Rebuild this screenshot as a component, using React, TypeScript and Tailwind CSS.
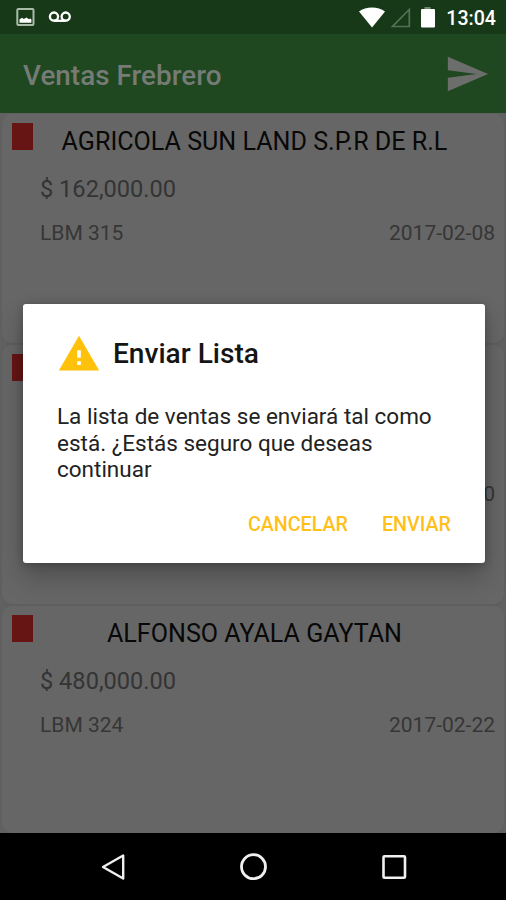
import React from "react";

type Sale = {
  name: string;
  amount: string;
  code: string;
  date: string;
  height: string;
};

const sales: Sale[] = [
  { name: "AGRICOLA SUN LAND S.P.R DE R.L", amount: "$ 162,000.00", code: "LBM 315", date: "2017-02-08", height: "h-[229px]" },
  { name: "", amount: "", code: "", date: "2017-02-20", height: "h-[259px]" },
  { name: "ALFONSO AYALA GAYTAN", amount: "$ 480,000.00", code: "LBM 324", date: "2017-02-22", height: "h-[227px]" },
];

function StatusBar() {
  return (
    <div className="flex h-[34px] shrink-0 items-center bg-[#173918] text-white">
      <svg className="ml-4 h-[18px] w-[19px]" viewBox="0 0 19 18">
        <rect x="1.3" y="1.1" width="16.2" height="15.8" rx="1" fill="none" stroke="#a9bba9" strokeWidth="2" />
        <path d="M3.500 14.800V11.500l2.400-1.800 2 1.300 2.600-1.600 2.400 1.800 1.500-.8 1 1v3.400z" fill="#fff" />
      </svg>
      <svg className="ml-[13px] h-3 w-6" viewBox="0 0 24 12">
        <g fill="none" stroke="#fff" strokeWidth="2.3">
          <circle cx="6" cy="5.6" r="4.1" />
          <circle cx="17.7" cy="5.6" r="4.1" />
          <path d="M6 9.8h11.7" />
        </g>
      </svg>
      <div className="ml-auto flex items-center pr-[10px]">
        <svg className="mr-[5px] h-[21px] w-[26px]" viewBox="0 0 26 21">
          <path d="M0 4.6C3.6 2 8 .6 13 .6S22.400 2 26 4.600L13 20.600z" fill="#fff" />
        </svg>
        <svg className="mr-[9px] h-[21px] w-[21px]" viewBox="0 0 21 21">
          <path d="M2.500 19.500H19.300V2.500z" fill="none" stroke="#547354" strokeWidth="1.7" />
        </svg>
        <svg className="mr-[10px] h-[21px] w-4" viewBox="0 0 16 21">
          <path d="M4.500 0h6v2.500h-6z" fill="#6f886f" />
          <rect x="1" y="1.900" width="14" height="18.600" rx="1" fill="#fff" />
        </svg>
        <span className="pt-[3px] text-[19.600px] leading-[31px] font-medium">13:04</span>
      </div>
    </div>
  );
}

function AppBar() {
  return (
    <div className="flex h-[79px] shrink-0 items-center justify-between bg-[#1f4720] pr-[16px] pl-[23px] text-[#767b76]">
      <h1 className="pt-[5px] text-[27.900px] leading-8 font-medium whitespace-nowrap">Ventas Frebrero</h1>
      <svg className="h-[46px] w-[46px]" viewBox="0 0 24 24" fill="#6c6e6c">
        <path d="M2.01 21L23 12 2.01 3 2 10l15 2-15 2z" />
      </svg>
    </div>
  );
}

function SaleCard({ sale }: { sale: Sale }) {
  return (
    <article className={`shrink-0 rounded-[10px] bg-[#666] shadow-[0_1px_2px_#5e5e5e] ${sale.height}`}>
      <div className="flex h-[54px] pt-[9px] pl-[10px]">
        <div className="h-[27px] w-[21px] bg-[#661514]" />
        <h2 className="mr-[28px] flex-1 pt-[4px] text-center text-[25.100px] leading-[30px] whitespace-nowrap text-[#080808]">{sale.name}</h2>
      </div>
      <p className="h-[46px] pt-[6px] pl-[38px] text-[23.600px] leading-[30px] text-[#343434]">{sale.amount}</p>
      <div className="flex justify-between pt-[5px] pr-[9px] pl-[38px] text-[21px] leading-[28px] text-[#363636]">
        <span>{sale.code}</span>
        <span className={sale.name ? "" : "pt-[30px]"}>{sale.date}</span>
      </div>
    </article>
  );
}

function WarningIcon() {
  return (
    <svg className="h-[44px] w-[44px]" viewBox="0 0 24 24" fill="#ffc10a">
      <path d="M1 21h22L12 2 1 21zm12-3h-2v-2h2v2zm0-4h-2v-4h2v4z" />
    </svg>
  );
}

function ConfirmDialog() {
  return (
    <section
      role="dialog"
      className="absolute top-[304px] left-[23px] flex h-[259px] w-[462px] flex-col rounded-[3px] bg-white px-[34px] shadow-[0_14px_26px_rgba(0,0,0,0.24),0_1px_8px_rgba(0,0,0,0.24)]"
    >
      <div className="flex h-[74px] items-center pt-[25px]">
        <WarningIcon />
        <h2 className="ml-[12px] text-[28.100px] leading-8 font-medium text-[#151515]">Enviar Lista</h2>
      </div>
      <p className="mt-[25px] text-[22.500px] leading-[26.500px] whitespace-nowrap text-[#222]">
        La lista de ventas se enviará tal como
        <br />
        está. ¿Estás seguro que deseas
        <br />
        continuar
      </p>
      <div className="mt-[28px] flex justify-end gap-[34px] text-[19.700px] leading-7 font-medium text-[#ffc01b]">
        <button>CANCELAR</button>
        <button>ENVIAR</button>
      </div>
    </section>
  );
}

function NavigationBar() {
  return (
    <nav className="flex h-[67px] shrink-0 items-center justify-between bg-black pr-[97px] pl-[99px]">
      <svg className="h-[30px] w-[30px]" viewBox="0 0 30 30">
        <path d="M4 15 24.200 3.500V26.500z" fill="none" stroke="#f0f0f0" strokeWidth="2.400" strokeLinejoin="round" />
      </svg>
      <svg className="h-[30px] w-[30px]" viewBox="0 0 30 30">
        <circle cx="14.500" cy="14.700" r="12" fill="none" stroke="#f0f0f0" strokeWidth="2.800" />
      </svg>
      <svg className="h-[30px] w-[30px]" viewBox="0 0 30 30">
        <rect x="4.500" y="4.200" width="21.500" height="21.500" rx="1" fill="none" stroke="#f0f0f0" strokeWidth="2.600" />
      </svg>
    </nav>
  );
}

export default function App() {
  return (
    <div className="relative flex h-[900px] w-[506px] flex-col overflow-hidden bg-[#616161] font-[Roboto,sans-serif]">
      <StatusBar />
      <AppBar />
      <main className="flex h-[720px] shrink-0 flex-col gap-[2px] pt-px pr-[2px] pl-[2px]">
        {sales.map((sale) => (
          <SaleCard key={sale.date} sale={sale} />
        ))}
      </main>
      <NavigationBar />
      <ConfirmDialog />
    </div>
  );
}
